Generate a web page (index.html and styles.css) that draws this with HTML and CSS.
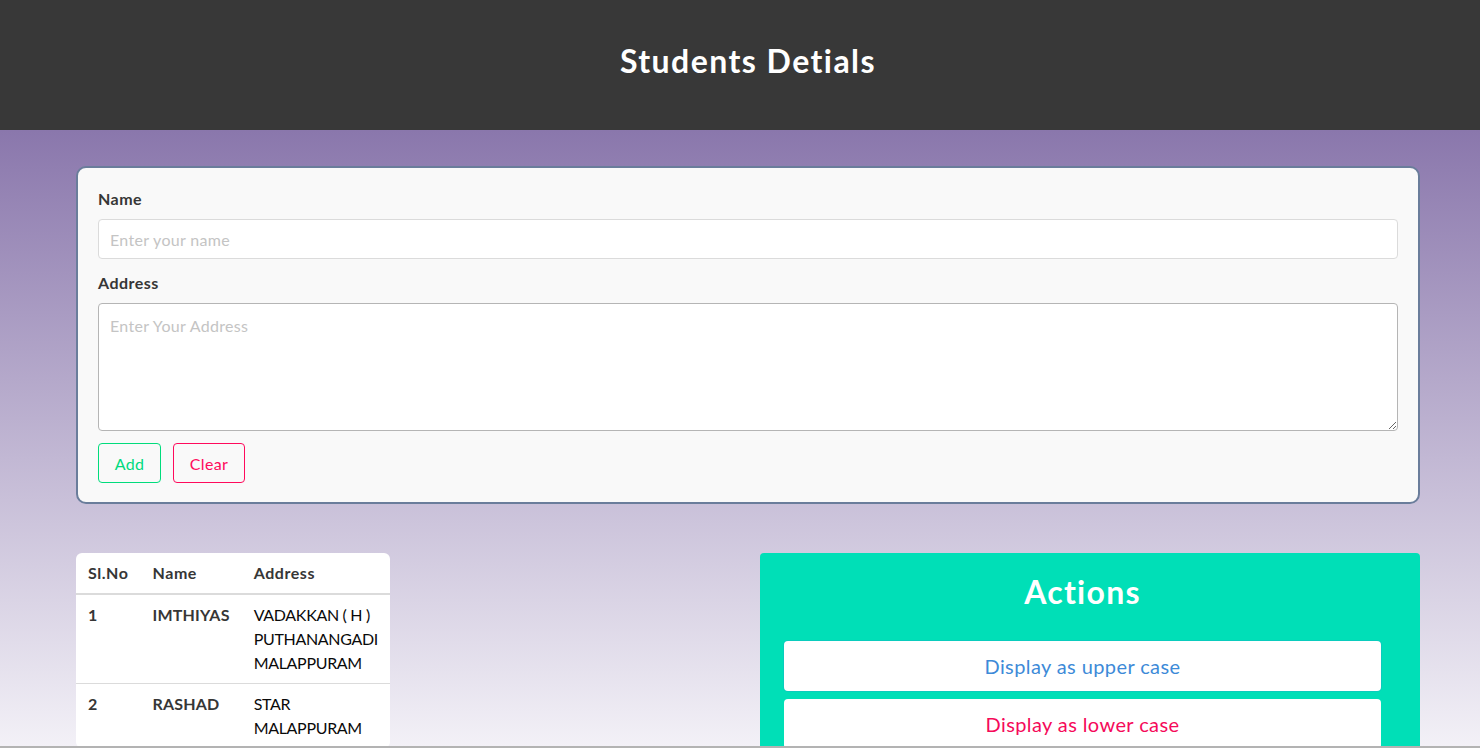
FILE: index.html
```html
<!DOCTYPE html>
<html lang="en">
<head>
<meta charset="utf-8">
<title>Students Detials</title>
<link rel="stylesheet" href="styles.css">
</head>
<body>
<header class="topbar">
  <h1 class="topbar-title">Students Detials</h1>
</header>
<main class="page">
  <form class="entry-card">
    <div class="field">
      <label class="field-label" for="name">Name</label>
      <input class="text-input" id="name" type="text" placeholder="Enter your name">
    </div>
    <div class="field">
      <label class="field-label" for="address">Address</label>
      <textarea class="text-area" id="address" placeholder="Enter Your Address"></textarea>
    </div>
    <div class="button-row">
      <button type="button" class="btn-outline btn-add">Add</button>
      <button type="button" class="btn-outline btn-clear">Clear</button>
    </div>
  </form>

  <div class="lower-row">
    <table class="students">
      <thead>
        <tr><th>Sl.No</th><th>Name</th><th>Address</th></tr>
      </thead>
      <tbody>
        <tr>
          <td class="cell-strong">1</td>
          <td class="cell-strong">IMTHIYAS</td>
          <td>VADAKKAN ( H )<br>PUTHANANGADI<br>MALAPPURAM</td>
        </tr>
        <tr>
          <td class="cell-strong">2</td>
          <td class="cell-strong">RASHAD</td>
          <td>STAR<br>MALAPPURAM</td>
        </tr>
      </tbody>
    </table>

    <section class="actions">
      <h2 class="actions-title">Actions</h2>
      <button type="button" class="action-btn action-upper">Display as upper case</button>
      <button type="button" class="action-btn action-lower">Display as lower case</button>
    </section>
  </div>
</main>
<div class="scroll-edge"></div>
</body>
</html>
```
FILE: styles.css
```css
* { box-sizing: border-box; }

html, body {
  margin: 0;
  padding: 0;
  height: 100%;
  overflow: hidden;
}

body {
  font-family: "Lato", "Open Sans", sans-serif;
  font-size: 16px;
  letter-spacing: 0.02em;
  color: #4a4a4a;
  background: linear-gradient(180deg, #8a77ac 130px, #f3f1f7 748px);
}

.topbar {
  background: #383838;
  height: 130px;
  padding: 43px 0 0 16px;
}

.topbar-title {
  margin: 0;
  text-align: center;
  color: #ffffff;
  font-size: 32px;
  font-weight: 700;
  line-height: 36px;
  letter-spacing: 0.045em;
}

.page {
  padding: 36px 60px 0 76px;
}

.entry-card {
  background: #f9f9f9;
  border: 2px solid #6a7d9b;
  border-radius: 10px;
  padding: 19px 20px 19px 20px;
}

.field {
  margin-bottom: 12px;
}

.field-label {
  display: block;
  color: #363636;
  font-weight: 700;
  font-size: 16px;
  line-height: 24px;
  margin-bottom: 8px;
  letter-spacing: 0.03em;
}

.text-input,
.text-area {
  display: block;
  width: 100%;
  font-family: inherit;
  font-size: 16px;
  letter-spacing: 0.02em;
  color: #363636;
  background: #ffffff;
  border: 1px solid #dbdbdb;
  border-radius: 4px;
  padding: 7px 11px;
  outline: none;
}

.text-input {
  height: 40px;
}

.text-area {
  height: 128px;
  border-color: #b5b5b5;
  resize: vertical;
  line-height: 24px;
  padding-top: 10px;
}

.text-input::placeholder,
.text-area::placeholder {
  color: #c4c4c4;
}

.button-row {
  display: flex;
  gap: 12px;
}

.btn-outline {
  height: 40px;
  padding: 0 10px;
  font-family: inherit;
  font-size: 16px;
  letter-spacing: 0.02em;
  background: transparent;
  border: 1px solid;
  border-radius: 4px;
  cursor: pointer;
}

.btn-add {
  color: #00d97e;
  border-color: #00dc7c;
  width: 63px;
}

.btn-clear {
  color: #ff0a5c;
  border-color: #ff0a5c;
  width: 72px;
}

.lower-row {
  display: flex;
  justify-content: space-between;
  align-items: flex-start;
  margin-top: 49px;
}

.students {
  background: #ffffff;
  border-collapse: separate;
  border-spacing: 0;
  border-radius: 6px;
  color: #363636;
  font-size: 16px;
  line-height: 24px;
}

.students th,
.students td {
  text-align: left;
  vertical-align: top;
  padding: 8px 12px;
  border-bottom: 1px solid #dbdbdb;
}

.students th {
  font-weight: 700;
  border-bottom-width: 2px;
  letter-spacing: 0.035em;
}

.students td {
  color: #0a0a0a;
  letter-spacing: -0.02em;
}

.students td.cell-strong {
  font-weight: 700;
  color: #363636;
  letter-spacing: 0.012em;
}

.students tbody tr:last-child td {
  border-bottom: 0;
}

.actions {
  width: 660px;
  height: 220px;
  background: #00dfb7;
  border-radius: 4px 4px 0 0;
  padding: 21px 39px 0 24px;
  display: flex;
  flex-direction: column;
  gap: 8px;
}

.actions-title {
  margin: 0 0 23px;
  text-align: center;
  color: #ffffff;
  font-size: 32px;
  font-weight: 700;
  line-height: 36px;
  letter-spacing: 0.04em;
}

.action-btn {
  height: 50px;
  width: 100%;
  background: #ffffff;
  border: 1px solid transparent;
  border-radius: 4px;
  font-family: inherit;
  font-size: 20px;
  letter-spacing: 0.02em;
  cursor: pointer;
}

.action-upper {
  color: #3d8ad8;
  box-shadow: 0 0 0 1px rgba(30, 170, 200, 0.35);
}

.action-lower {
  color: #f50a5a;
}

.scroll-edge {
  position: fixed;
  left: 0;
  right: 0;
  bottom: 0;
  height: 2px;
  background: #b3b3b3;
}
```
